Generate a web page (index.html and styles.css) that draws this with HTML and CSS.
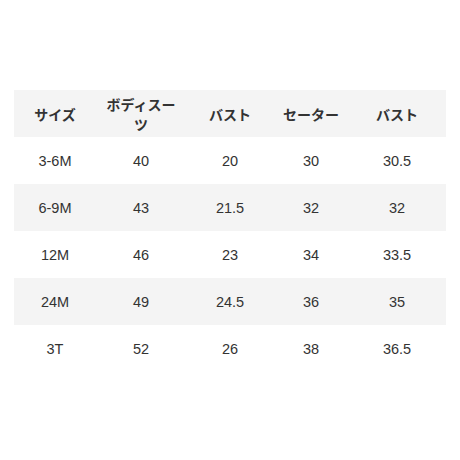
FILE: index.html
```html
<!DOCTYPE html>
<html lang="ja">
<head>
<meta charset="utf-8">
<link rel="stylesheet" href="styles.css">
</head>
<body>
<table class="size-table">
  <colgroup>
    <col class="c1"><col class="c2"><col class="c3"><col class="c4"><col class="c5">
  </colgroup>
  <thead>
    <tr class="shade"><th>サイズ</th><th>ボディスーツ</th><th>バスト</th><th>セーター</th><th>バスト</th></tr>
  </thead>
  <tbody>
    <tr><td>3-6M</td><td>40</td><td>20</td><td>30</td><td>30.5</td></tr>
    <tr class="shade"><td>6-9M</td><td>43</td><td>21.5</td><td>32</td><td>32</td></tr>
    <tr><td>12M</td><td>46</td><td>23</td><td>34</td><td>33.5</td></tr>
    <tr class="shade"><td>24M</td><td>49</td><td>24.5</td><td>36</td><td>35</td></tr>
    <tr><td>3T</td><td>52</td><td>26</td><td>38</td><td>36.5</td></tr>
  </tbody>
</table>
</body>
</html>
```
FILE: styles.css
```css
html, body {
  margin: 0;
  padding: 0;
  background: #ffffff;
}
body {
  font-family: "Liberation Sans", "Noto Sans CJK JP", sans-serif;
  color: #333333;
  font-size: 14px;
}
.size-table {
  margin: 90px 0 0 14px;
  width: 432px;
  border-collapse: collapse;
  table-layout: fixed;
}
.c1 { width: 82px; }
.c2 { width: 90px; }
.c3 { width: 88px; }
.c4 { width: 74px; }
.c5 { width: 98px; }
.size-table tr {
  height: 47px;
}
.size-table th,
.size-table td {
  padding: 0 8px;
  text-align: center;
  vertical-align: middle;
  line-height: 20px;
}
.size-table th {
  font-family: "Noto Sans CJK JP", sans-serif;
  font-weight: 600;
}
.size-table td {
  font-weight: 400;
  font-size: 14.5px;
}
.shade {
  background: #f4f4f4;
}
```
